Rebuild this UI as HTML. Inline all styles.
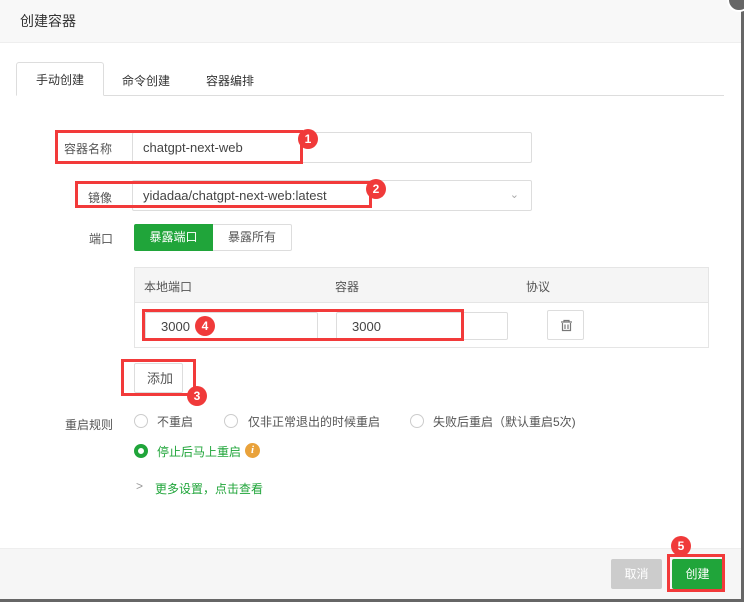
<!DOCTYPE html>
<html><head><meta charset="utf-8"><style>
*{box-sizing:border-box;margin:0;padding:0}
body{width:744px;height:602px;background:#666;font-family:"Liberation Sans","Noto Sans CJK SC",sans-serif;font-size:12px;color:#555;position:relative;overflow:hidden}
.dlg{position:absolute;left:0;top:0;width:741px;height:599px;background:#fff}
.hd{height:43px;background:#f8f8f8;border-bottom:1px solid #eee;padding-left:20px;line-height:43px;font-size:14px;color:#333}
.ft{position:absolute;left:0;right:0;top:548px;bottom:0;background:#f6f6f6;border-top:1px solid #eee}
.abs{position:absolute}
.red{position:absolute;border:3px solid #f23a3a}
.badge{position:absolute;width:20px;height:20px;border-radius:50%;background:#f03a3a;color:#fff;font-size:12px;text-align:center;line-height:20px;font-weight:bold}
.inp{position:absolute;border:1px solid #ddd;border-radius:2px;background:#fff;color:#444;font-size:13px;padding-left:10px}
.radio{position:absolute;width:14px;height:14px;border:1px solid #ccc;border-radius:50%;background:#fff}
</style></head><body>
<div class="dlg">
<div class="hd">创建容器</div>
<div class="abs" style="left:16px;top:95px;width:708px;border-top:1px solid #ddd"></div>
<div class="abs" style="left:16px;top:62px;width:88px;height:34px;border:1px solid #ddd;border-bottom:1px solid #fff;border-radius:3px 3px 0 0;background:#fff;text-align:center;line-height:34px;color:#333">手动创建</div>
<div class="abs" style="left:122px;top:72px;color:#333">命令创建</div>
<div class="abs" style="left:206px;top:72px;color:#333">容器编排</div>
<div class="abs" style="left:64px;top:140px;color:#555">容器名称</div>
<div class="inp" style="left:132px;top:132px;width:400px;height:31px;line-height:30px">chatgpt-next-web</div>
<div class="red" style="left:55px;top:130px;width:248px;height:34px"></div>
<div class="badge" style="left:298px;top:129px">1</div>
<div class="abs" style="left:88px;top:189px">镜像</div>
<div class="inp" style="left:132px;top:180px;width:400px;height:31px;line-height:30px">yidadaa/chatgpt-next-web:latest<span style="position:absolute;right:12px;top:-1px;color:#aaa;font-size:11px">&#8964;</span></div>
<div class="red" style="left:75px;top:181px;width:297px;height:27px"></div>
<div class="badge" style="left:366px;top:179px">2</div>
<div class="abs" style="left:89px;top:230px">端口</div>
<div class="abs" style="left:134px;top:224px;width:79px;height:27px;background:#20a53a;color:#fff;text-align:center;line-height:27px;border-radius:2px 0 0 2px">暴露端口</div>
<div class="abs" style="left:213px;top:224px;width:79px;height:27px;border:1px solid #ddd;border-left:none;text-align:center;line-height:25px;color:#555;border-radius:0 2px 2px 0">暴露所有</div>
<div class="abs" style="left:134px;top:267px;width:575px;height:81px;border:1px solid #e5e5e5"></div>
<div class="abs" style="left:135px;top:268px;width:573px;height:35px;background:#f5f5f5;border-bottom:1px solid #e5e5e5"></div>
<div class="abs" style="left:144px;top:278px">本地端口</div>
<div class="abs" style="left:335px;top:278px">容器</div>
<div class="abs" style="left:526px;top:278px">协议</div>
<div class="inp" style="left:145px;top:312px;width:173px;height:28px;line-height:27px;padding-left:15px">3000</div>
<div class="inp" style="left:336px;top:312px;width:172px;height:28px;line-height:27px;padding-left:15px">3000</div>
<div class="inp" style="left:547px;top:310px;width:37px;height:30px;padding:0"><svg width="37" height="30" viewBox="0 0 37 30"><path d="M13 11h11M16 11v-1.5h5V11M14.5 12v7.5h8V12M17 13.5v4.5M20 13.5v4.5" fill="none" stroke="#777" stroke-width="1.2"/></svg></div>
<div class="red" style="left:142px;top:309px;width:322px;height:32px"></div>
<div class="badge" style="left:195px;top:316px">4</div>
<div class="inp" style="left:134px;top:363px;width:49px;height:30px;line-height:29px;padding-left:12px;color:#555">添加</div>
<div class="red" style="left:121px;top:359px;width:75px;height:37px"></div>
<div class="badge" style="left:187px;top:386px">3</div>
<div class="abs" style="left:65px;top:416px">重启规则</div>
<div class="radio" style="left:134px;top:414px"></div><div class="abs" style="left:157px;top:413px">不重启</div>
<div class="radio" style="left:224px;top:414px"></div><div class="abs" style="left:248px;top:413px">仅非正常退出的时候重启</div>
<div class="radio" style="left:410px;top:414px"></div><div class="abs" style="left:433px;top:413px">失败后重启（默认重启5次)</div>
<div class="radio" style="left:134px;top:444px;border:4px solid #20a53a"></div>
<div class="abs" style="left:157px;top:443px;color:#20a53a">停止后马上重启</div>
<div class="abs" style="left:245px;top:443px;width:15px;height:15px;border-radius:50%;background:#e9a23b;color:#fff;font-size:11px;font-style:italic;font-weight:bold;text-align:center;line-height:15px;font-family:'Liberation Serif',serif">i</div>
<div class="abs" style="left:136px;top:479px;color:#999">&gt;</div>
<div class="abs" style="left:155px;top:480px;color:#20a53a">更多设置，点击查看</div>
<div class="ft"></div>
<div class="abs" style="left:611px;top:559px;width:51px;height:30px;background:#ccc;color:#fff;text-align:center;line-height:30px;border-radius:2px">取消</div>
<div class="abs" style="left:672px;top:559px;width:51px;height:30px;background:#20a53a;color:#fff;text-align:center;line-height:30px;border-radius:2px">创建</div>
<div class="red" style="left:667px;top:554px;width:58px;height:38px"></div>
<div class="badge" style="left:671px;top:536px">5</div>
</div>
<div class="abs" style="left:727px;top:-12px;width:24px;height:24px;border-radius:50%;background:#666;border:2px solid #fff"></div>
</body></html>
